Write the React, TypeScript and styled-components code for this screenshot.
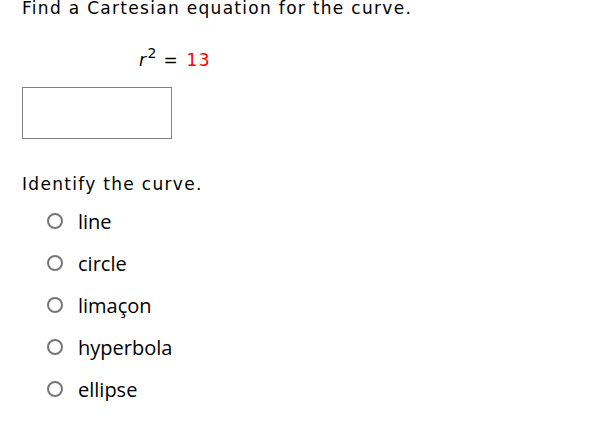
import styled, { createGlobalStyle } from "styled-components";

const GlobalStyle = createGlobalStyle`
  body {
    margin: 0;
    background: #ffffff;
    color: #000000;
  }
`;

const Page = styled.div`
  padding: 0 0 0 22px;
  font-family: "DejaVu Sans", Verdana, sans-serif;
  font-size: 17px;
  letter-spacing: 1.3px;
`;

const Prompt = styled.div`
  margin-top: -2px;
  line-height: 20px;
  white-space: nowrap;
`;

const Equation = styled.div`
  margin: 32px 0 0 117px;
  line-height: 20px;
  white-space: nowrap;
  letter-spacing: 1.6px;
`;

const Var = styled.span`
  font-style: italic;
`;

const Sup = styled.sup`
  font-size: 14px;
  vertical-align: 8px;
  line-height: 0;
  letter-spacing: 0;
`;

const Value = styled.span`
  color: #ff0000;
`;

const AnswerBox = styled.input`
  display: block;
  box-sizing: border-box;
  width: 150px;
  height: 52px;
  margin-top: 17px;
  border: 1px solid #808080;
  background: #ffffff;
  outline: none;
`;

const Question = styled.div`
  margin-top: 35px;
  line-height: 20px;
`;

const Options = styled.div`
  display: flex;
  flex-direction: column;
  gap: 18px;
  margin: 15px 0 0 25px;
`;

const Option = styled.label`
  display: flex;
  align-items: center;
  gap: 15px;
  height: 24px;
  font-family: "Open Sans", "Segoe UI", sans-serif;
  font-size: 20px;
  letter-spacing: 0;
`;

const Radio = styled.span`
  box-sizing: border-box;
  width: 16px;
  height: 16px;
  border: 2px solid #767676;
  border-radius: 50%;
  flex: none;
`;

const choices = ["line", "circle", "limaçon", "hyperbola", "ellipse"];

export default function App() {
  return (
    <Page>
      <GlobalStyle />
      <Prompt>Find a Cartesian equation for the curve.</Prompt>
      <Equation>
        <Var>r</Var>
        <Sup>2</Sup> = <Value>13</Value>
      </Equation>
      <AnswerBox type="text" />
      <Question>Identify the curve.</Question>
      <Options>
        {choices.map((c) => (
          <Option key={c}>
            <Radio />
            {c}
          </Option>
        ))}
      </Options>
    </Page>
  );
}
